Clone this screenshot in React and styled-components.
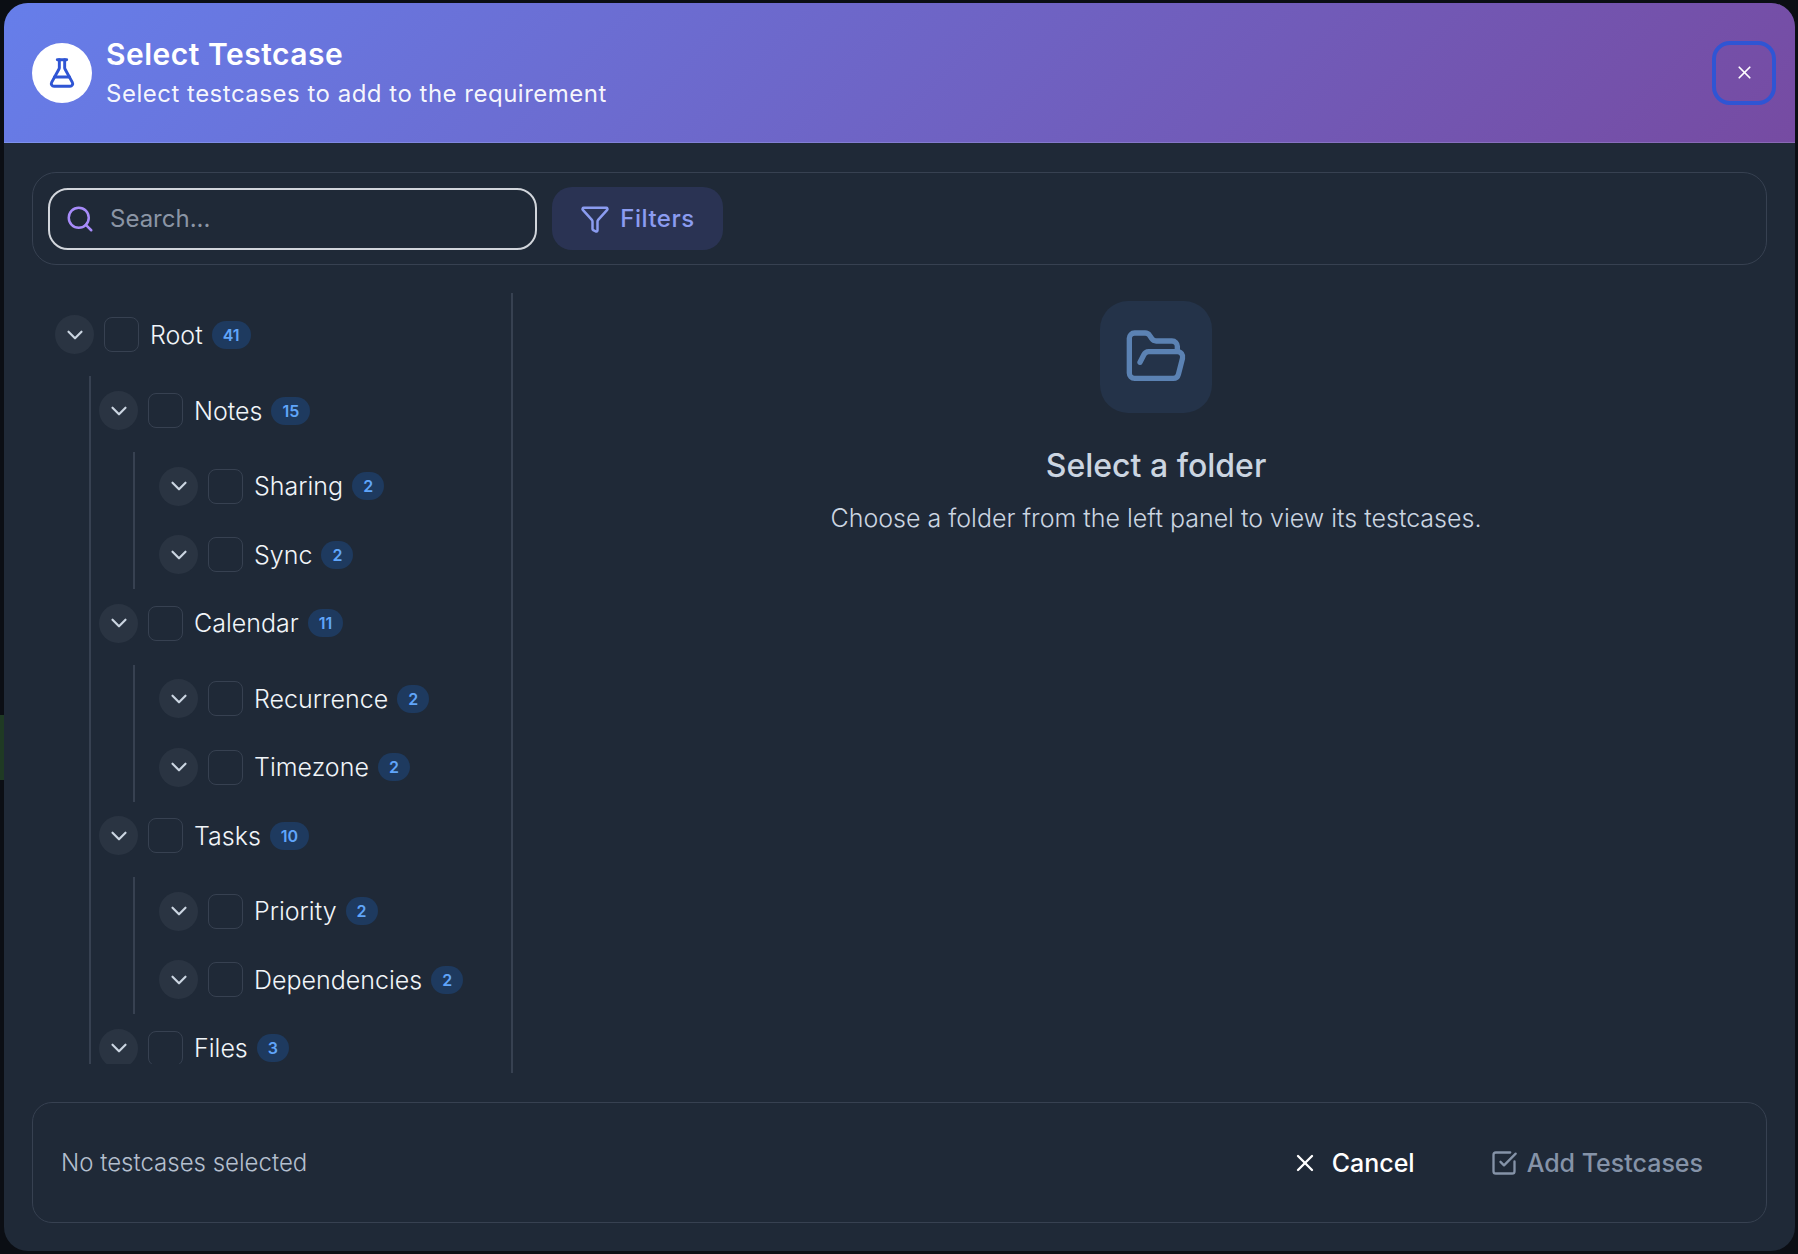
import React from 'react';
import styled, { createGlobalStyle } from 'styled-components';
import { ChevronDown, Filter, FlaskConical, FolderOpen, Search, SquareCheckBig, X } from 'lucide-react';

const Global = createGlobalStyle`
  html, body { margin: 0; padding: 0; background: #0b0e14; }
  * { box-sizing: border-box; }
  body { font-family: Inter, "Liberation Sans", sans-serif; }
`;

const Backdrop = styled.div`
  width: 1798px;
  height: 1254px;
  padding: 3px 3px 3px 4px;
  overflow: hidden;
  background:
    linear-gradient(#1f3a24, #1f3a24) 0 715px / 4px 65px no-repeat,
    #0b0e14;
`;

const Modal = styled.div`
  height: 100%;
  display: flex;
  flex-direction: column;
  background: #1f2937;
  border-radius: 24px;
  overflow: hidden;
`;

const Header = styled.header`
  height: 140px;
  flex: none;
  display: flex;
  align-items: center;
  gap: 14px;
  padding: 0 19px 0 28px;
  background: linear-gradient(135deg, #667eea 0%, #764ba2 100%);
  border-bottom: 1px solid rgba(255, 255, 255, 0.15);
`;

const HeaderIcon = styled.div`
  width: 60px;
  height: 60px;
  flex: none;
  border-radius: 50%;
  background: #fff;
  display: flex;
  align-items: center;
  justify-content: center;
  color: #2f55d4;
`;

const HeaderText = styled.div`
  flex: 1;
  display: flex;
  flex-direction: column;
  gap: 7px;
  color: #fff;
`;

const Title = styled.h1`
  margin: 0;
  font-size: 30px;
  line-height: 36px;
  font-weight: 600;
  letter-spacing: 0.5px;
`;

const Subtitle = styled.p`
  margin: 0;
  font-size: 24px;
  line-height: 30px;
  font-weight: 400;
  letter-spacing: 0.5px;
  color: rgba(255, 255, 255, 0.95);
`;

const CloseButton = styled.button`
  width: 64px;
  height: 64px;
  flex: none;
  border: 4px solid #2f55d4;
  border-radius: 18px;
  background: transparent;
  color: #fff;
  display: flex;
  align-items: center;
  justify-content: center;
  padding: 0;
`;

const Body = styled.div`
  flex: 1;
  min-height: 0;
  display: flex;
  flex-direction: column;
  padding: 29px 28px 28px;
`;

const Toolbar = styled.div`
  height: 93px;
  flex: none;
  display: flex;
  align-items: center;
  gap: 15px;
  padding: 0 15px;
  border: 1px solid #374151;
  border-radius: 24px;
`;

const SearchBox = styled.div`
  width: 489px;
  height: 62px;
  display: flex;
  align-items: center;
  gap: 15px;
  padding: 0 15px;
  border: 2px solid #d1d5db;
  border-radius: 20px;
  color: #a78bfa;
`;

const SearchPlaceholder = styled.span`
  font-size: 24px;
  color: #8b95a5;
`;

const FilterButton = styled.button`
  width: 171px;
  height: 63px;
  border: none;
  border-radius: 20px;
  background: #2a3353;
  color: #8b9cf0;
  display: flex;
  align-items: center;
  justify-content: center;
  gap: 10px;
  font: 500 24px Inter, sans-serif;
  letter-spacing: 0.5px;
`;

const Main = styled.div`
  flex: 1;
  min-height: 0;
  display: flex;
  margin-top: 28px;
`;

const TreePanel = styled.div`
  width: 481px;
  height: 780px;
  flex: none;
  padding: 0 0 9px 23px;
  border-right: 2px solid #374151;
`;

const TreeScroll = styled.div`
  height: 100%;
  overflow: hidden;
  padding-top: 7.6px;
`;

const Row = styled.div`
  height: 68.4px;
  display: flex;
  align-items: center;
`;

const Chevron = styled.span`
  width: 39px;
  height: 39px;
  flex: none;
  border-radius: 50%;
  background: #2a3442;
  color: #cbd5e1;
  display: flex;
  align-items: center;
  justify-content: center;
`;

const Check = styled.span`
  width: 35px;
  height: 35px;
  flex: none;
  margin-left: 10px;
  border: 1px solid #374151;
  border-radius: 8px;
`;

const Label = styled.span`
  margin-left: 11px;
  font-size: 25px;
  font-weight: 300;
  color: #f1f5f9;
`;

const Badge = styled.span`
  height: 28px;
  min-width: 32px;
  margin-left: 9px;
  padding: 0 11px;
  display: flex;
  align-items: center;
  justify-content: center;
  border-radius: 14px;
  background: #1e3a5f;
  color: #60a5fa;
  font-size: 16px;
  font-weight: 600;
`;

const Children = styled.div`
  margin: 7.4px 0 0 34px;
  padding-left: ${(p) => p.$indent}px;
  border-left: 2px solid #374151;
`;

const Empty = styled.div`
  flex: 1;
  display: flex;
  flex-direction: column;
  align-items: center;
  padding: 8px 0 0 32px;
`;

const EmptyIcon = styled.div`
  width: 112px;
  height: 112px;
  border-radius: 28px;
  background: #243349;
  color: #5b82b3;
  display: flex;
  align-items: center;
  justify-content: center;
`;

const EmptyTitle = styled.h2`
  margin: 33px 0 0;
  font-size: 32px;
  line-height: 40px;
  font-weight: 500;
  color: #cbd5e1;
`;

const EmptyText = styled.p`
  margin: 16px 0 0;
  font-size: 25px;
  line-height: 32px;
  font-weight: 300;
  color: #cbd5e1;
`;

const Footer = styled.div`
  height: 121px;
  flex: none;
  margin-top: 28px;
  display: flex;
  align-items: center;
  justify-content: space-between;
  padding: 0 63px 0 28px;
  border: 1px solid #374151;
  border-radius: 20px;
`;

const Status = styled.span`
  font-size: 24px;
  font-weight: 300;
  color: #b4bfce;
`;

const Actions = styled.div`
  display: flex;
  align-items: center;
  gap: 75px;
`;

const Action = styled.button`
  display: flex;
  align-items: center;
  gap: ${(p) => p.$gap}px;
  padding: 0;
  border: none;
  background: none;
  color: ${(p) => p.$color};
  font: 500 25px Inter, sans-serif;
`;

const Node = ({ name, count, indent, children }) => (
  <>
    <Row>
      <Chevron><ChevronDown size={26} strokeWidth={2} /></Chevron>
      <Check />
      <Label>{name}</Label>
      <Badge>{count}</Badge>
    </Row>
    {children && <Children $indent={indent}>{children}</Children>}
  </>
);

export default function App() {
  return (
    <Backdrop>
      <Global />
      <Modal>
        <Header>
          <HeaderIcon><FlaskConical size={32} strokeWidth={2.2} /></HeaderIcon>
          <HeaderText>
            <Title>Select Testcase</Title>
            <Subtitle>Select testcases to add to the requirement</Subtitle>
          </HeaderText>
          <CloseButton aria-label="Close"><X size={21} strokeWidth={2} /></CloseButton>
        </Header>
        <Body>
          <Toolbar>
            <SearchBox>
              <Search size={30} strokeWidth={2} />
              <SearchPlaceholder>Search...</SearchPlaceholder>
            </SearchBox>
            <FilterButton><Filter size={30} strokeWidth={2} />Filters</FilterButton>
          </Toolbar>
          <Main>
            <TreePanel>
              <TreeScroll>
                <Node name="Root" count="41" indent={8}>
                  <Node name="Notes" count="15" indent={24}>
                    <Node name="Sharing" count="2" />
                    <Node name="Sync" count="2" />
                  </Node>
                  <Node name="Calendar" count="11" indent={24}>
                    <Node name="Recurrence" count="2" />
                    <Node name="Timezone" count="2" />
                  </Node>
                  <Node name="Tasks" count="10" indent={24}>
                    <Node name="Priority" count="2" />
                    <Node name="Dependencies" count="2" />
                  </Node>
                  <Node name="Files" count="3" />
                </Node>
              </TreeScroll>
            </TreePanel>
            <Empty>
              <EmptyIcon><FolderOpen size={64} strokeWidth={2} /></EmptyIcon>
              <EmptyTitle>Select a folder</EmptyTitle>
              <EmptyText>Choose a folder from the left panel to view its testcases.</EmptyText>
            </Empty>
          </Main>
          <Footer>
            <Status>No testcases selected</Status>
            <Actions>
              <Action $color="#ffffff" $gap={13}><X size={28} strokeWidth={2} />Cancel</Action>
              <Action $color="#8593a8" $gap={9}><SquareCheckBig size={28} strokeWidth={2} />Add Testcases</Action>
            </Actions>
          </Footer>
        </Body>
      </Modal>
    </Backdrop>
  );
}
